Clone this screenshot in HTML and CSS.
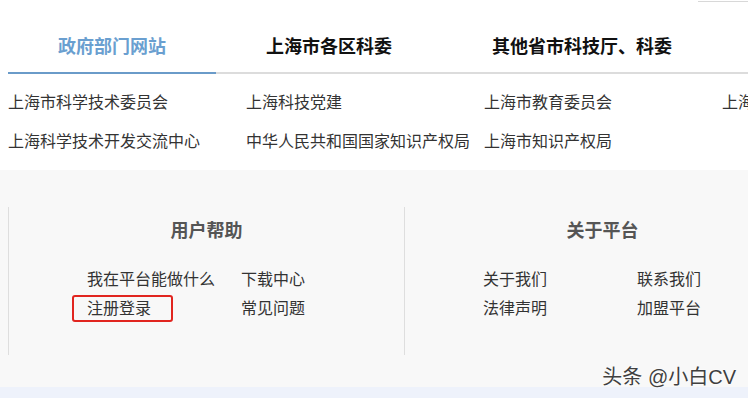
FILE: index.html
```html
<!DOCTYPE html>
<html lang="zh-CN">
<head>
  <meta charset="UTF-8">
  <meta name="viewport" content="width=device-width, initial-scale=1.0">
  <title>友情链接</title>
  <link rel="stylesheet" href="styles.css">
</head>
<body>
  <div class="page">
    <!-- 顶部残留边线 -->
    <div class="topbar"><div class="topbar-line"></div></div>

    <!-- 链接分类标签 -->
    <div class="tabs">
      <div class="tab active">政府部门网站</div>
      <div class="tab">上海市各区科委</div>
      <div class="tab">其他省市科技厅、科委</div>
    </div>

    <div class="links">
      <a>上海市科学技术委员会</a>
      <a>上海科技党建</a>
      <a>上海市教育委员会</a>
      <a>上海市经济和信息化委员会</a>
      <a>上海科学技术开发交流中心</a>
      <a>中华人民共和国国家知识产权局</a>
      <a>上海市知识产权局</a>
      <a></a>
    </div>

    <!-- 底部帮助区 -->
    <div class="footer">
      <div class="footer-col">
        <h4>用户帮助</h4>
        <div class="footer-links">
          <a>我在平台能做什么</a>
          <a>下载中心</a>
          <a class="marked">注册登录<span class="mark-box"></span></a>
          <a>常见问题</a>
        </div>
      </div>
      <div class="footer-col">
        <h4>关于平台</h4>
        <div class="footer-links">
          <a>关于我们</a>
          <a>联系我们</a>
          <a>法律声明</a>
          <a>加盟平台</a>
        </div>
      </div>
    </div>
    <div class="bottom-strip"></div>

    <div class="watermark">头条 @小白CV</div>
  </div>
</body>
</html>
```

FILE: styles.css
```css
body {
  margin: 0;
  font-family: "Noto Sans CJK SC", "Liberation Sans", sans-serif;
  color: #333;
  background: #fff;
  overflow: hidden;
}

.page {
  position: relative;
  width: 748px;
  height: 398px;
  overflow: hidden;
}

.topbar {
  height: 21px;
  display: flex;
  justify-content: flex-end;
}

.topbar-line {
  width: 50px;
  height: 1px;
  margin-top: 1px;
  background: #d8d8d8;
}

.tabs {
  display: flex;
  margin-left: 8px;
  border-bottom: 2px solid #dcdcdc;
}

.tab {
  padding: 0 50px;
  height: 51px;
  line-height: 49px;
  font-size: 18px;
  font-weight: bold;
  color: #111;
  white-space: nowrap;
  flex-shrink: 0;
}

.tab.active {
  color: #6a9fd0;
  border-bottom: 2px solid #6a9bc9;
  margin-bottom: -2px;
}

.links {
  display: grid;
  grid-template-columns: repeat(4, 238px);
  grid-auto-rows: 39px;
  line-height: 39px;
  padding: 8px 0 10px 8px;
  font-size: 16px;
  color: #333;
}

.links a {
  white-space: nowrap;
}

.footer {
  display: flex;
  background: #f8f8f8;
  padding: 37px 0 32px 8px;
}

.footer-col {
  flex-shrink: 0;
  width: 395px;
  height: 148px;
  border-left: 1px solid #dedede;
}

.footer-col h4 {
  margin: 10px 0 0;
  line-height: 24px;
  font-size: 18px;
  font-weight: bold;
  color: #555;
  text-align: center;
}

.footer-links {
  display: grid;
  grid-template-columns: 154px 154px;
  grid-auto-rows: 29px;
  line-height: 29px;
  margin-top: 23px;
  padding-left: 78px;
  font-size: 16px;
  color: #333;
}

.marked {
  position: relative;
}

/* 截图上的红色标注框 */
.mark-box {
  position: absolute;
  left: -15px;
  top: 2px;
  width: 97px;
  height: 23px;
  border: 2.5px solid #e1251f;
  border-radius: 3px;
}

.bottom-strip {
  height: 11px;
  background: #eef2fb;
}

.watermark {
  position: absolute;
  right: 12px;
  top: 365px;
  font-family: "Liberation Sans", "Noto Sans CJK SC", sans-serif;
  font-size: 20px;
  line-height: 24px;
  color: #404040;
  text-shadow: 0 0 2px #fff, 0 0 2px #fff;
  white-space: nowrap;
}
```
